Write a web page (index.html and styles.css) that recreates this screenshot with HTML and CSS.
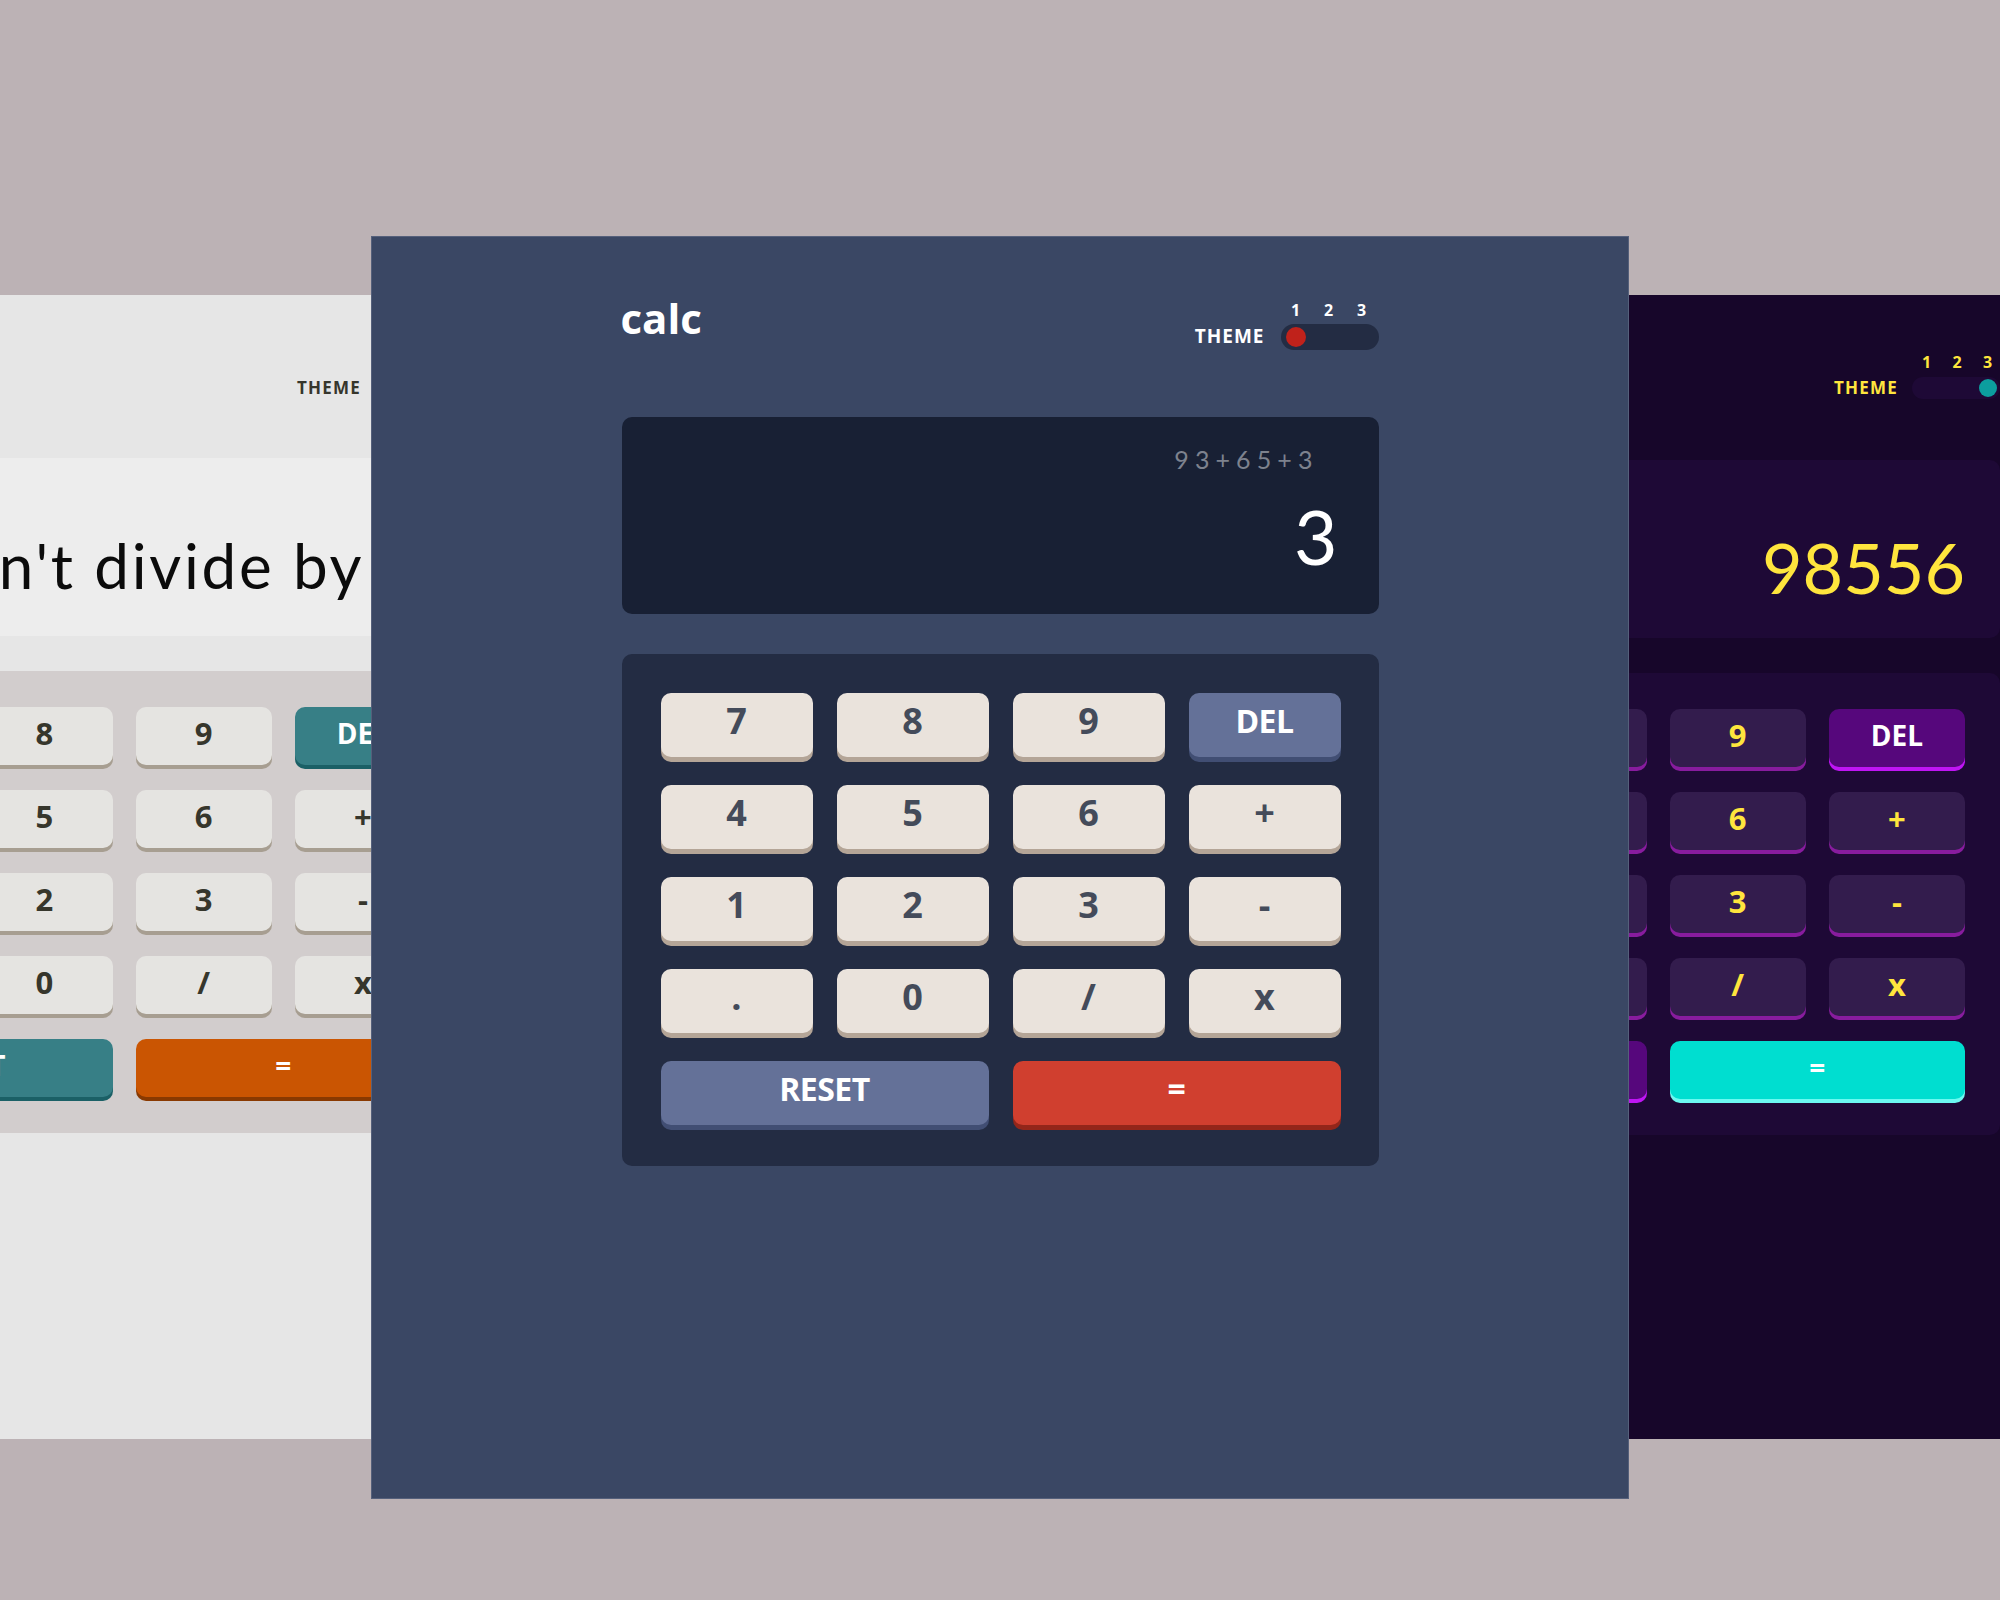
FILE: index.html
```html
<!DOCTYPE html>
<html lang="en">
<head>
<meta charset="utf-8">
<title>calc – themes</title>
<link rel="stylesheet" href="styles.css">
</head>
<body>
<div class="desk">

  <section class="win win-left t2">
    <div class="calc calc-side">
      <header class="top">
        <span class="logo">calc</span>
        <div class="theme">
          <span class="theme-label">THEME</span>
          <div class="switch">
            <div class="nums"><span>1</span><span>2</span><span>3</span></div>
            <div class="track pos-2"><span class="knob"></span></div>
          </div>
        </div>
      </header>
      <div class="screen"><div class="result msg">Can't divide by 0</div></div>
      <div class="pad">
        <button class="key">7</button><button class="key">8</button><button class="key">9</button><button class="key alt small">DEL</button>
        <button class="key">4</button><button class="key">5</button><button class="key">6</button><button class="key">+</button>
        <button class="key">1</button><button class="key">2</button><button class="key">3</button><button class="key">-</button>
        <button class="key">.</button><button class="key">0</button><button class="key">/</button><button class="key">x</button>
        <button class="key alt small wide">RESET</button><button class="key eq small wide">=</button>
      </div>
    </div>
  </section>

  <section class="win win-right t3">
    <div class="calc calc-side">
      <header class="top">
        <span class="logo">calc</span>
        <div class="theme">
          <span class="theme-label">THEME</span>
          <div class="switch">
            <div class="nums"><span>1</span><span>2</span><span>3</span></div>
            <div class="track pos-3"><span class="knob"></span></div>
          </div>
        </div>
      </header>
      <div class="screen"><div class="result">98556</div></div>
      <div class="pad">
        <button class="key">7</button><button class="key">8</button><button class="key">9</button><button class="key alt small">DEL</button>
        <button class="key">4</button><button class="key">5</button><button class="key">6</button><button class="key">+</button>
        <button class="key">1</button><button class="key">2</button><button class="key">3</button><button class="key">-</button>
        <button class="key">.</button><button class="key">0</button><button class="key">/</button><button class="key">x</button>
        <button class="key alt small wide">RESET</button><button class="key eq small wide">=</button>
      </div>
    </div>
  </section>

  <section class="win win-main t1">
    <div class="calc calc-main">
      <header class="top">
        <span class="logo">calc</span>
        <div class="theme">
          <span class="theme-label">THEME</span>
          <div class="switch">
            <div class="nums"><span>1</span><span>2</span><span>3</span></div>
            <div class="track pos-1"><span class="knob"></span></div>
          </div>
        </div>
      </header>
      <div class="screen">
        <div class="expr">93+65+3</div>
        <div class="result">3</div>
      </div>
      <div class="pad">
        <button class="key">7</button><button class="key">8</button><button class="key">9</button><button class="key alt small">DEL</button>
        <button class="key">4</button><button class="key">5</button><button class="key">6</button><button class="key">+</button>
        <button class="key">1</button><button class="key">2</button><button class="key">3</button><button class="key">-</button>
        <button class="key">.</button><button class="key">0</button><button class="key">/</button><button class="key">x</button>
        <button class="key alt small wide">RESET</button><button class="key eq small wide">=</button>
      </div>
    </div>
  </section>

</div>
</body>
</html>
```

FILE: styles.css
```css
* { box-sizing: border-box; margin: 0; padding: 0; }

body {
  margin: 0;
  background: #bcb2b5;
  font-family: "Open Sans", "Liberation Sans", sans-serif;
}

.desk {
  position: relative;
  width: 2000px;
  height: 1600px;
  overflow: hidden;
}

/* windows on the desktop */
.win {
  position: absolute;
  display: flex;
  justify-content: center;
}
.win-left  { left: -300px; top: 295px; width: 848px; height: 1144px; z-index: 1; }
.win-right { left: 1300px; top: 295px; width: 716px; height: 1144px; z-index: 1; }
.win-main  { left: 371px;  top: 236px; width: 1258px; height: 1263px; z-index: 2; border: 1px solid #55607b; }

.calc { display: flex; flex-direction: column; }

.top { display: flex; justify-content: space-between; }
.logo { font-weight: 700; }
.theme { display: flex; align-items: flex-end; }
.theme-label { font-weight: 700; }
.switch { display: flex; flex-direction: column; }
.nums { display: grid; font-weight: 700; text-align: center; }
.track { display: flex; }
.track.pos-1 { justify-content: flex-start; }
.track.pos-2 { justify-content: center; }
.track.pos-3 { justify-content: flex-end; }
.knob { display: block; border-radius: 50%; }

.screen { display: flex; flex-direction: column; align-items: flex-end; border-radius: 10px; }
.result { font-family: Lato, "Open Sans", sans-serif; font-weight: 400; white-space: nowrap; }

.pad { display: grid; grid-template-columns: repeat(4, 1fr); border-radius: 10px; }
.key {
  border: 0;
  border-radius: 10px;
  font-family: "Open Sans", "Liberation Sans", sans-serif;
  font-weight: 700;
  line-height: 1;
  display: flex;
  align-items: center;
  justify-content: center;
}
.key.wide { grid-column: span 2; }

/* ---------- side calculators ---------- */
.calc-side { width: 684px; }
.calc-side .top { height: 163px; padding-top: 57px; align-items: flex-start; }
.win-right .calc-side .top { height: 165px; }
.calc-side .logo { font-size: 40px; line-height: 47px; }
.calc-side .theme-label { font-size: 17px; line-height: 22px; letter-spacing: 1.2px; margin-right: 14px; }
.win-left .calc-side .theme-label { margin-right: 17px; }
.calc-side .switch { width: 88px; }
.calc-side .nums { grid-template-columns: repeat(3, 29px); column-gap: 1.5px; font-size: 16px; line-height: 20px; margin-bottom: 5px; }
.calc-side .track { height: 22px; border-radius: 11px; padding: 2px 3px; }
.calc-side .knob { width: 18px; height: 18px; }
.calc-side .screen { height: 178px; justify-content: flex-end; padding: 0 35px 31px; }
.calc-side .result { font-size: 70px; line-height: 80px; }
.calc-side .result.msg { font-size: 62px; letter-spacing: 2.7px; margin-right: 11px; }
.calc-side .pad {
  margin-top: 35px;
  padding: 36px 35px;
  column-gap: 23px;
  row-gap: 25px;
  grid-auto-rows: 58px;
}
.calc-side .key { font-size: 31px; padding-bottom: 6px; }
.calc-side .key.small { font-size: 28px; }

/* ---------- main calculator ---------- */
.calc-main { width: 757px; padding-top: 60px; }
.calc-main .top { align-items: flex-end; }
.calc-main .logo { font-size: 42px; line-height: 42px; margin-bottom: 11px; margin-left: -1px; }
.calc-main .theme-label { font-size: 19px; line-height: 26px; letter-spacing: 1px; margin-right: 16px; padding-bottom: 1px; }
.calc-main .switch { width: 98px; }
.calc-main .nums { grid-template-columns: repeat(3, 30px); column-gap: 3px; font-size: 16px; line-height: 20px; margin-bottom: 4px; }
.calc-main .track { height: 26px; border-radius: 13px; padding: 3px 5px; }
.calc-main .knob { width: 20px; height: 20px; }
.calc-main .screen { margin-top: 67px; height: 197px; padding: 27px 41px 0 41px; }
.calc-main .expr {
  font-family: Lato, "Open Sans", sans-serif;
  font-size: 25px;
  line-height: 30px;
  letter-spacing: 6.1px;
  margin-right: 19px;
}
.calc-main .result { font-size: 75px; line-height: 80px; margin-top: 22px; }
.calc-main .pad {
  margin-top: 40px;
  padding: 39px 38px 41px 39px;
  column-gap: 24px;
  row-gap: 28px;
  grid-auto-rows: 64px;
}
.calc-main .key { font-size: 36px; padding-bottom: 8px; }
.calc-main .key.small { font-size: 32px; letter-spacing: -0.5px; }

/* ---------- theme 1 (dark blue) ---------- */
.t1 { background: #3a4764; color: #ffffff; }
.t1 .track { background: #232c43; }
.t1 .knob { background: #c0221b; }
.t1 .screen { background: #182034; }
.t1 .expr { color: #7d828e; }
.t1 .pad { background: #232c43; }
.t1 .key { background: #eae3dc; color: #444b5a; box-shadow: 0 5px 0 #b4a597; }
.t1 .key.alt { background: #647198; color: #ffffff; box-shadow: 0 5px 0 #414e73; }
.t1 .key.eq { background: #d03f2f; color: #ffffff; box-shadow: 0 5px 0 #93261a; }

/* ---------- theme 2 (light) ---------- */
.t2 { background: #e6e6e6; color: #36362c; }
.t2 .track { background: #d2cdcd; }
.t2 .knob { background: #ca5502; }
.t2 .screen { background: #ededed; }
.t2 .result { color: #0b0b0b; }
.t2 .pad { background: #d2cdcd; }
.t2 .key { background: #e5e4e1; color: #36362c; box-shadow: 0 4px 0 #a79e91; }
.t2 .key.alt { background: #377f86; color: #ffffff; box-shadow: 0 4px 0 #1b6066; }
.t2 .key.eq { background: #ca5502; color: #ffffff; box-shadow: 0 4px 0 #893901; }

/* ---------- theme 3 (violet) ---------- */
.t3 { background: #17062a; color: #ffe53d; }
.t3 .track { background: #1e0936; }
.t3 .knob { background: #0c9e9e; }
.t3 .screen { background: #1e0936; }
.t3 .result { color: #ffe53d; }
.t3 .pad { background: #1e0936; }
.t3 .key { background: #331c4d; color: #ffe53d; box-shadow: 0 4px 0 #881c9e; }
.t3 .key.alt { background: #56077c; color: #ffffff; box-shadow: 0 4px 0 #bf15f4; }
.t3 .key.eq { background: #00ded0; color: #ffffff; box-shadow: 0 4px 0 #6cf9f1; }
```
